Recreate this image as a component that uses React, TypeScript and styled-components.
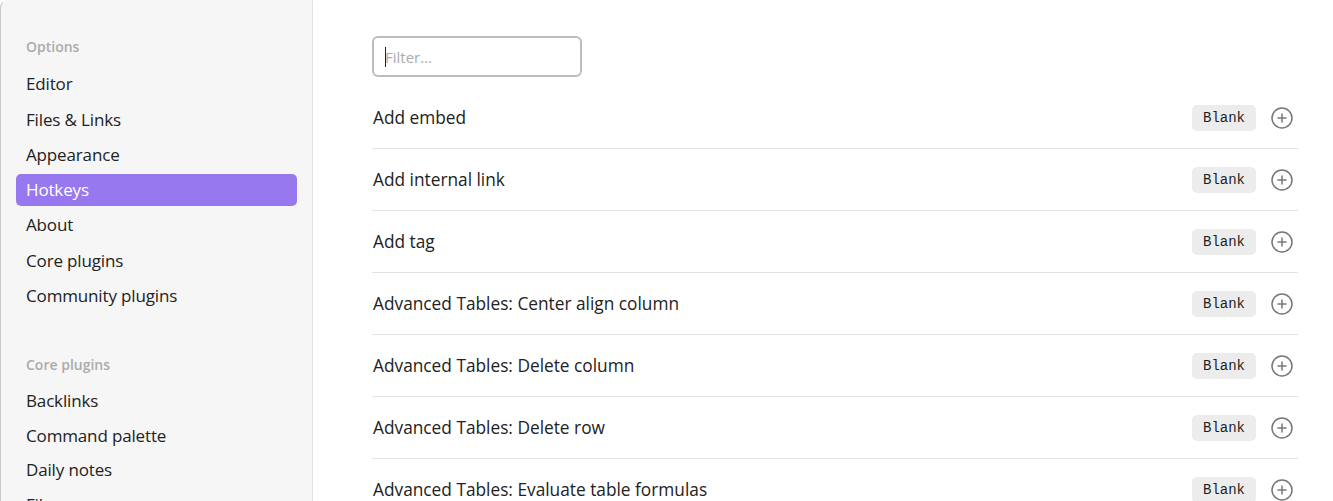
import React from 'react';
import styled, { createGlobalStyle } from 'styled-components';
import { CirclePlus } from 'lucide-react';

const GlobalStyle = createGlobalStyle`
    html, body {
        margin: 0;
        padding: 0;
        height: 501px;
        overflow: hidden;
        background: #ffffff;
        font-family: "Open Sans", "Noto Sans", sans-serif;
    }
`;

const Window = styled.div`
    display: flex;
    height: 501px;
    width: 1333px;
    overflow: hidden;
`;

const Sidebar = styled.nav`
    flex: 0 0 313px;
    box-sizing: border-box;
    background: #f6f6f6;
    border-left: 1px solid #c9c9c9;
    border-top: 1px solid transparent;
    border-right: 1px solid #e2e2e2;
    border-top-left-radius: 8px;
    padding: 36px 15px 0 15px;
    display: flex;
    flex-direction: column;
`;

const Group = styled.div`
    display: flex;
    flex-direction: column;
    gap: 3.3px;
    & + & {
        margin-top: 43px;
    }
`;

const GroupTitle = styled.div`
    font-size: 14px;
    font-weight: 600;
    color: #ababab;
    height: 20px;
    line-height: 20px;
    padding-left: 10px;
    margin-bottom: 8px;
`;

const NavItem = styled.div<{ $active?: boolean }>`
    flex-shrink: 0;
    height: 32px;
    line-height: 32px;
    padding-left: 10px;
    border-radius: 5px;
    font-size: 17px;
    letter-spacing: -0.15px;
    color: ${(p) => (p.$active ? '#ffffff' : '#222222')};
    background: ${(p) => (p.$active ? '#9878ef' : 'transparent')};
`;

const CoreList = styled(Group)`
    gap: 2.8px;
    ${GroupTitle} {
        margin-bottom: 7px;
    }
`;

const Main = styled.main`
    flex: 1;
    padding: 36px 35px 0 59px;
    display: flex;
    flex-direction: column;
`;

const FilterWrap = styled.div`
    position: relative;
    flex-shrink: 0;
    width: 210px;
    height: 41px;
    margin-bottom: 10px;
    &::after {
        content: '';
        position: absolute;
        left: 13px;
        top: 11px;
        width: 1px;
        height: 20px;
        background: #222;
    }
`;

const FilterInput = styled.input`
    box-sizing: border-box;
    width: 100%;
    height: 100%;
    border: 2px solid #bdbdbd;
    border-radius: 6px;
    padding: 0 11px;
    font-family: "Open Sans", "Noto Sans", sans-serif;
    font-size: 15px;
    color: #222;
    outline: none;
    &::placeholder {
        color: #ababab;
    }
`;

const Row = styled.div`
    display: flex;
    align-items: center;
    height: 61px;
    border-bottom: 1px solid #e3e3e3;
    padding-left: 1px;
    flex-shrink: 0;
`;

const RowLabel = styled.div`
    flex: 1;
    font-size: 17.3px;
    color: #222222;
`;

const Key = styled.kbd`
    font-family: "Liberation Mono", "DejaVu Sans Mono", monospace;
    font-size: 14px;
    color: #1e1e1e;
    background: #ececec;
    border-radius: 5px;
    padding: 0 11px;
    height: 26px;
    line-height: 26px;
`;

const AddButton = styled.div`
    display: flex;
    align-items: center;
    justify-content: center;
    width: 24px;
    height: 24px;
    margin-left: 14px;
    margin-right: 4px;
    color: #777777;
`;

const optionItems = ['Editor', 'Files & Links', 'Appearance', 'Hotkeys', 'About', 'Core plugins', 'Community plugins'];
const coreItems = ['Backlinks', 'Command palette', 'Daily notes', 'File recovery'];

const commands = [
    'Add embed',
    'Add internal link',
    'Add tag',
    'Advanced Tables: Center align column',
    'Advanced Tables: Delete column',
    'Advanced Tables: Delete row',
    'Advanced Tables: Evaluate table formulas',
];

const App: React.FC = () => {
    return (
        <Window>
            <GlobalStyle />
            <Sidebar>
                <Group>
                    <GroupTitle>Options</GroupTitle>
                    {optionItems.map((item) => (
                        <NavItem key={item} $active={item === 'Hotkeys'}>
                            {item}
                        </NavItem>
                    ))}
                </Group>
                <CoreList>
                    <GroupTitle>Core plugins</GroupTitle>
                    {coreItems.map((item) => (
                        <NavItem key={item}>{item}</NavItem>
                    ))}
                </CoreList>
            </Sidebar>
            <Main>
                <FilterWrap>
                    <FilterInput placeholder="Filter..." />
                </FilterWrap>
                {commands.map((cmd) => (
                    <Row key={cmd}>
                        <RowLabel>{cmd}</RowLabel>
                        <Key>Blank</Key>
                        <AddButton>
                            <CirclePlus size={24} strokeWidth={1.5} />
                        </AddButton>
                    </Row>
                ))}
            </Main>
        </Window>
    );
};

export default App;
